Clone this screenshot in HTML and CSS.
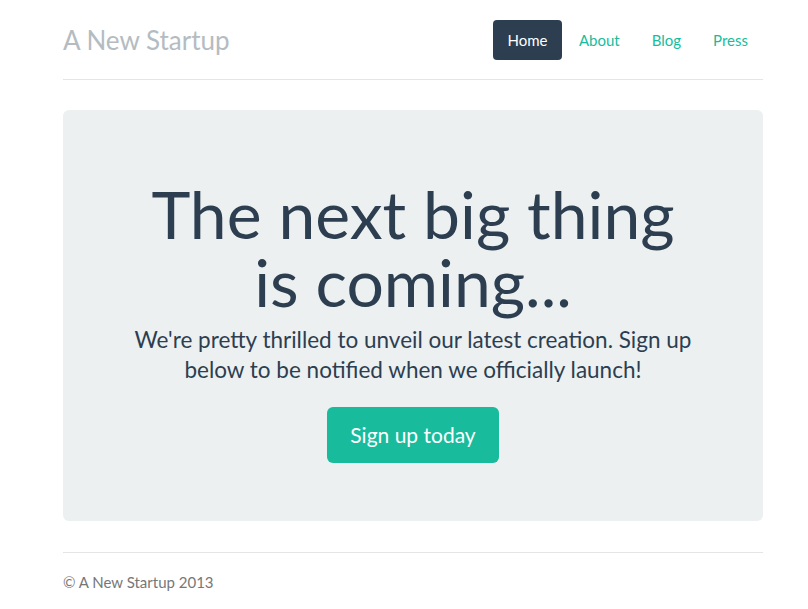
FILE: index.html
```html
<!DOCTYPE html>
<html lang="en">
<head>
<meta charset="utf-8">
<title>A New Startup</title>
<link rel="stylesheet" href="styles.css">
</head>
<body>
<div class="container">
  <header class="header">
    <h3 class="brand">A New Startup</h3>
    <nav class="nav">
      <a class="pill active" href="#">Home</a>
      <a class="pill" href="#">About</a>
      <a class="pill" href="#">Blog</a>
      <a class="pill" href="#">Press</a>
    </nav>
  </header>

  <section class="jumbotron">
    <h1 class="headline">The next big thing is coming...</h1>
    <p class="lead">We're pretty thrilled to unveil our latest creation. Sign up below to be notified when we officially launch!</p>
    <div class="cta"><a class="btn" href="#">Sign up today</a></div>
  </section>

  <footer class="footer">
    <p class="copy">&copy; A New Startup 2013</p>
  </footer>
</div>
</body>
</html>
```

FILE: styles.css
```css
* { box-sizing: border-box; }

html, body {
  margin: 0;
  background: #ffffff;
}

body {
  font-family: Lato, "Open Sans", "Liberation Sans", sans-serif;
  font-size: 15px;
  line-height: 21px;
  color: #2c3e50;
  padding: 20px 0;
}

.container {
  width: 730px;
  margin-left: 48px;
  padding: 0 15px;
}

.header {
  display: flex;
  justify-content: space-between;
  align-items: flex-start;
  padding-bottom: 19px;
  border-bottom: 1px solid #e5e5e5;
  margin-bottom: 30px;
}

.brand {
  margin: 0;
  font-size: 26px;
  font-weight: 400;
  line-height: 40px;
  color: #b4bcc2;
}

.nav {
  display: flex;
  gap: 2px;
}

.pill {
  display: block;
  padding: 10px 15px;
  line-height: 20px;
  font-size: 15px;
  color: #18bc9c;
  text-decoration: none;
  border-radius: 4px;
}

.pill.active {
  background: #2c3e50;
  color: #ffffff;
  padding: 10px 14.5px;
}

.jumbotron {
  background: #ecf0f1;
  border-radius: 6px;
  padding: 48px 60px;
  text-align: center;
  margin-bottom: 31px;
}

.headline {
  margin: 22px 0 9px;
  font-size: 66px;
  line-height: 68px;
  font-weight: 400;
  color: #2c3e50;
}

.lead {
  margin: 0 0 22px;
  font-size: 22.5px;
  line-height: 30px;
  font-weight: 400;
  color: #2c3e50;
}

.cta {
  margin-bottom: 10px;
}

.btn {
  display: inline-block;
  background: #18bc9c;
  color: #ffffff;
  font-size: 21px;
  line-height: 28px;
  padding: 14px 23px;
  border-radius: 6px;
  text-decoration: none;
}

.footer {
  border-top: 1px solid #e5e5e5;
  padding-top: 19px;
}

.copy {
  margin: 0 0 10px;
  color: #777777;
  font-size: 15px;
  line-height: 21px;
}
```
